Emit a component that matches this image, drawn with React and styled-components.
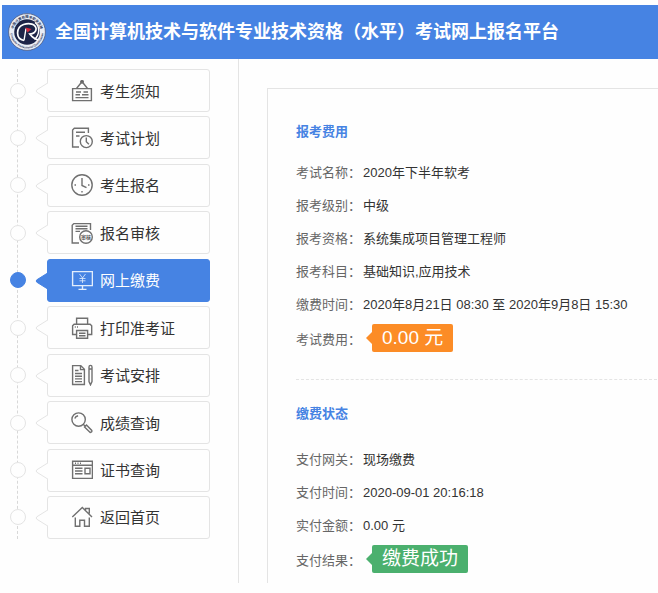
import React from 'react';
import styled, { createGlobalStyle, css } from 'styled-components';

const colors = {
	blue: '#4683e3',
	orange: '#fc8c26',
	green: '#4bb06e',
	line: '#e4e4e4',
	text: '#333',
	label: '#666',
	icon: '#707070',
	page: '#fefefe',
};

const GlobalStyle = createGlobalStyle`
	* {
		box-sizing: border-box;
	}
	body {
		margin: 0;
		background: ${colors.page};
		color: ${colors.text};
		font-family: 'Liberation Sans', 'Noto Sans CJK SC', sans-serif;
		font-size: 13px;
	}
`

const Page = styled.div`
	display: flex;
	flex-direction: column;
	min-height: 100vh;
	padding: 5px 0 10px 2px;
`

const Header = styled.header`
	display: flex;
	align-items: center;
	gap: 9px;
	height: 54px;
	padding-left: 6px;
	background: ${colors.blue};
	color: #fff;
`

const SiteTitle = styled.h1`
	margin: 0;
	padding-bottom: 4px;
	font-family: 'Noto Sans CJK SC', sans-serif;
	font-size: 18px;
	line-height: 26px;
	font-weight: bold;
	white-space: nowrap;
`

const Body = styled.div`
	display: flex;
	flex: 1;
`

const Sidebar = styled.nav`
	flex: none;
	width: 237px;
	padding: 10px 28px 0 8px;
	border-right: 1px solid ${colors.line};
`

const Menu = styled.ul`
	position: relative;
	display: flex;
	flex-direction: column;
	justify-content: space-between;
	min-height: 470px;
	margin: 0;
	padding: 0;
	list-style: none;
	&::before {
		content: '';
		position: absolute;
		top: 0;
		bottom: 0;
		left: 7px;
		border-left: 1px dashed #d8d8d8;
	}
`

const MenuItem = styled.li`
	position: relative;
	display: flex;
	align-items: center;
	gap: 21px;
`

const Dot = styled.span`
	flex: none;
	width: 16px;
	height: 16px;
	border: 1px solid ${colors.line};
	border-radius: 50%;
	background: ${colors.page};
	${({ $active }) => $active && css`
		border-color: ${colors.blue};
		background: ${colors.blue};
	`}
`

const MenuLink = styled.a`
	position: relative;
	flex: 1;
	display: flex;
	align-items: center;
	gap: 7px;
	height: 43px;
	padding-left: 23px;
	border: 1px solid ${colors.line};
	border-radius: 3px;
	background: ${colors.page};
	color: ${colors.text};
	font-family: 'Noto Sans CJK SC', sans-serif;
	font-size: 15px;
	line-height: 22px;
	text-decoration: none;
	${({ $active }) => $active && css`
		border-color: ${colors.blue};
		background: ${colors.blue};
		color: #fff;
	`}
`

const Pointer = styled.svg`
	position: absolute;
	top: 12px;
	left: -13px;
	fill: ${({ $active }) => ($active ? colors.blue : colors.page)};
	stroke: ${({ $active }) => ($active ? colors.blue : colors.line)};
`

const MenuIcon = styled.svg`
	flex: none;
	fill: none;
	stroke: ${({ $active }) => ($active ? '#e3edfc' : colors.icon)};
	stroke-width: 1.4;
`

const Main = styled.main`
	flex: 1;
	display: flex;
	min-width: 0;
	padding: 29px 0 0 28px;
`

const Panel = styled.div`
	flex: 1;
	min-width: 0;
	padding: 29px 1px 0 28px;
	border: solid ${colors.line};
	border-width: 1px 0 0 1px;
`

const SectionTitle = styled.h2`
	margin: 0;
	color: ${colors.blue};
	font-size: 13px;
	line-height: 28px;
	font-weight: bold;
`

const Details = styled.dl`
	margin: 10px 0 0;
`

const Section = styled.section`
	& + & {
		margin-top: 20px;
		padding-top: 20px;
		border-top: 1px dashed ${colors.line};
	}
	& + & ${Details} {
		margin-top: 15px;
	}
`

const Row = styled.div`
	display: flex;
	align-items: center;
	min-height: 33px;
	line-height: 20px;
	white-space: nowrap;
	${({ $tagged }) => $tagged && css`
		min-height: 38px;
	`}
`

const Term = styled.dt`
	flex: none;
	width: 67px;
	color: ${colors.label};
`

const Value = styled.dd`
	margin: 0;
`

const Tag = styled.span`
	position: relative;
	display: block;
	margin: 0 0 4px 9px;
	padding: 0 10px;
	border-radius: 2px;
	background: ${({ $color }) => $color};
	color: #fff;
	font-size: 19px;
	line-height: 28px;
	&::before {
		content: '';
		position: absolute;
		top: 8px;
		left: -6px;
		border: solid transparent;
		border-width: 6px 6px 6px 0;
		border-right-color: ${({ $color }) => $color};
	}
`

const Logo = () => (
	<svg width="38" height="38" viewBox="0 0 38 38" aria-hidden="true">
		<defs>
			<path id="ringTop" d="M5.2 19a13.8 13.8 0 0 1 27.6 0" />
			<path id="ringBottom" d="M2.6 19a16.4 16.4 0 0 0 32.8 0" />
		</defs>
		<circle cx="19" cy="19" r="18.4" fill="#e9edf5" stroke="#4d597f" strokeWidth="0.8" />
		<text fontSize="3.4" fontWeight="bold" fill="#273156" textAnchor="middle">
			<textPath href="#ringTop" startOffset="50%">中国计算机技术职业资格</textPath>
		</text>
		<text fontSize="2.8" fontWeight="bold" fill="#273156" textAnchor="middle">
			<textPath href="#ringBottom" startOffset="50%">Computer Professional Qualification</textPath>
		</text>
		<circle cx="19" cy="19" r="12.8" fill="#1d2447" />
		<path d="M16 27.500C7.500 26 7.500 14.500 15.500 11.500c6-2 12-.5 12.600 4 .3 3.500-2.800 5.300-6.300 5.500 2.400 3.300 4.800 5 8.200 5.800" fill="none" stroke="#fff" strokeWidth="1.7" />
		<path d="M18 15.500l-2 12M27 9.500c5 4 5 12-.5 17" fill="none" stroke="#fff" strokeWidth="1.400" />
		<path d="M17.500 14.500l6 1.500-4 3.500z" fill="#d3293f" />
	</svg>
);

const icons = {
	notice: (
		<>
			<circle cx="11" cy="1.8" r="1.3" fill="#555" />
			<path d="M10.3 2.5L5.5 8.5M11.7 2.5L16.5 8.5M1.6 8.6h18.8v12H1.6zM5 12h5M12.5 12H17M4.5 14.8H9M11 14.8h6.5M4.5 17.6h13" />
		</>
	),
	plan: (
		<>
			<path d="M17.4 6V1.3H3.3L1.6 3v17H8M5 5.3h9M5 9h3.5" />
			<circle cx="15.3" cy="14.6" r="6" />
			<path d="M15.3 10.5v4.2l2.6 2.6" />
		</>
	),
	signup: (
		<>
			<circle cx="11" cy="11" r="10.2" />
			<path d="M11 4v7.500l4.500 2.200M3.500 11H5M17 11h1.500M11 17v1.500" />
		</>
	),
	review: (
		<>
			<path d="M19.5 8V1.6H2.8L1.2 3.2V21H8M4.5 4.2h12M4.5 6.8h12M4.5 9.4H9" />
			<circle cx="15" cy="15" r="6.3" />
			<text x="15" y="16.8" fontSize="5" fontWeight="bold" textAnchor="middle" fill="#555" stroke="none">审核</text>
		</>
	),
	payment: (
		<>
			<path d="M1.6 2.6h19.800v14H1.6zM11.5 16.6v3.8M7.5 20.4h8" />
			<path d="M8.5 5l3 4 3-4M11.5 9v5M8.5 9.5h6M8.5 11.8h6" strokeWidth="0.8" />
		</>
	),
	printer: (
		<>
			<path d="M5.6 7V1.3h11V7M5.6 17.5H1.6V8.8l1.5-1.5h16l1.6 1.500v8.700h-4M5.6 13.5h11v7.800h-11zM8 16.2h6.5M8 18.7h6.5M3.8 10h1M6 10h1" />
		</>
	),
	schedule: (
		<>
			<path d="M1.6 1.6h8.200l3.600 3.700v15.200H1.6zM9.5 1.8v3.8h3.700M4 6.5h3.500M4 9.5h7M4 12.2h7M4 14.9h7M4 17.6h7" />
			<path d="M18 3q0-1.600 1.500-1.600T21 3v14.500l-1.500 3.300L18 17.500zM18 5h3" />
		</>
	),
	score: (
		<>
			<circle cx="7.6" cy="7.6" r="6.7" />
			<path d="M3.8 6.5c.5-1.6 1.600-2.500 3.300-2.800M12 12l2.200 2.200M13.500 15l2-2 5.300 5.500q.6 1.600-1.600 2z" />
		</>
	),
	certificate: (
		<>
			<path d="M1.6 2.2h19.800v17.200H1.6zM1.6 6.2h19.800M4 4.200h1M6.5 4.2h1M9 4.2h1M4 9.2h7.500M4 12h7.500M4 14.8h7.500M14 9.2h5v5.600h-5z" />
		</>
	),
	home: (
		<>
			<path d="M1.3 11L11.300 1.500 21 11M4.300 11.500v8.800h4.500v-6h4.700v6h4.800v-8.800M14.500 4V2.500h3.800v5" />
		</>
	),
};

const menu = [
	{ icon: 'notice', text: '考生须知' },
	{ icon: 'plan', text: '考试计划' },
	{ icon: 'signup', text: '考生报名' },
	{ icon: 'review', text: '报名审核' },
	{ icon: 'payment', text: '网上缴费', active: true },
	{ icon: 'printer', text: '打印准考证' },
	{ icon: 'schedule', text: '考试安排' },
	{ icon: 'score', text: '成绩查询' },
	{ icon: 'certificate', text: '证书查询' },
	{ icon: 'home', text: '返回首页' },
];

const sections = [
	{
		title: '报考费用',
		rows: [
			{ term: '考试名称：', value: '2020年下半年软考' },
			{ term: '报考级别：', value: '中级' },
			{ term: '报考资格：', value: '系统集成项目管理工程师' },
			{ term: '报考科目：', value: '基础知识,应用技术' },
			{ term: '缴费时间：', value: '2020年8月21日 08:30 至 2020年9月8日 15:30' },
			{ term: '考试费用：', value: '0.00 元', tag: colors.orange },
		],
	},
	{
		title: '缴费状态',
		rows: [
			{ term: '支付网关：', value: '现场缴费' },
			{ term: '支付时间：', value: '2020-09-01 20:16:18' },
			{ term: '实付金额：', value: '0.00 元' },
			{ term: '支付结果：', value: '缴费成功', tag: colors.green },
		],
	},
];

const App = () => {
	return (
		<>
			<GlobalStyle />
			<Page lang="zh-CN">
				<Header>
					<Logo />
					<SiteTitle>全国计算机技术与软件专业技术资格（水平）考试网上报名平台</SiteTitle>
				</Header>
				<Body>
					<Sidebar>
						<Menu>
							{menu.map(({ icon, text, active }) => (
								<MenuItem key={icon}>
									<Dot $active={active} />
									<MenuLink href={`#${icon}`} $active={active} aria-current={active ? 'page' : undefined}>
										<Pointer $active={active} width="13" height="18" viewBox="0 0 13 18" aria-hidden="true">
											<path d="M13 .8L1.8 7.8Q.6 9 1.8 10.2L13 17.2" />
										</Pointer>
										<MenuIcon $active={active} width="22" height="22" viewBox="0 0 22 22" aria-hidden="true">
											{icons[icon]}
										</MenuIcon>
										{text}
									</MenuLink>
								</MenuItem>
							))}
						</Menu>
					</Sidebar>
					<Main>
						<Panel>
							{sections.map(({ title, rows }) => (
								<Section key={title}>
									<SectionTitle>{title}</SectionTitle>
									<Details>
										{rows.map(({ term, value, tag }) => (
											<Row key={term} $tagged={Boolean(tag)}>
												<Term>{term}</Term>
												<Value>{tag ? <Tag $color={tag}>{value}</Tag> : value}</Value>
											</Row>
										))}
									</Details>
								</Section>
							))}
						</Panel>
					</Main>
				</Body>
			</Page>
		</>
	);
}

export default App;
